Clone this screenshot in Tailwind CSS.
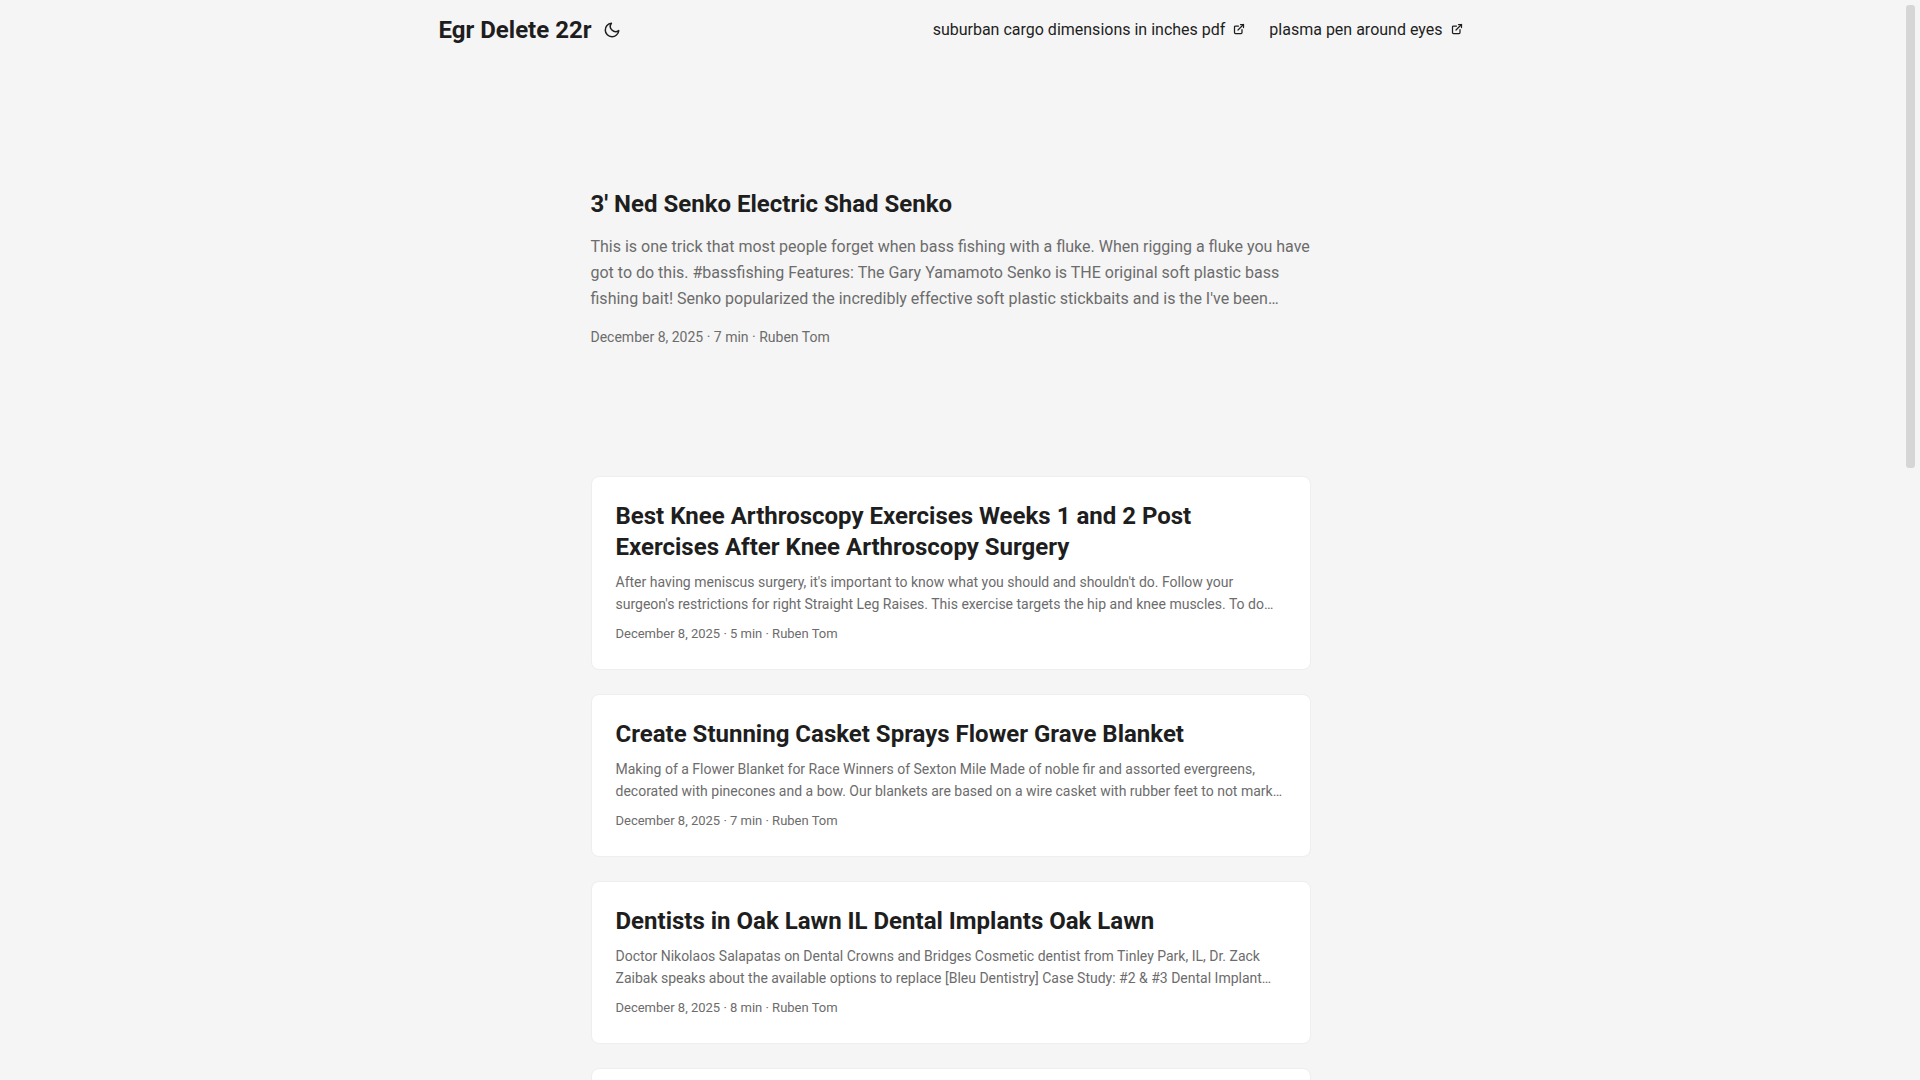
<!DOCTYPE html>
<html lang="en">
<head>
<meta charset="utf-8">
<meta name="viewport" content="width=device-width, initial-scale=1">
<title>Egr Delete 22r</title>
<script src="https://cdn.jsdelivr.net/npm/@tailwindcss/browser@4"></script>
</head>
<body class="flex h-screen overflow-hidden bg-[#f5f5f5] font-['Roboto',sans-serif] text-base text-[#1e1e1e]">
  <div class="min-w-0 flex-1 overflow-hidden">
    <header>
      <nav class="mx-auto flex h-15 max-w-[1072px] items-center justify-between px-6">
        <div class="flex items-center gap-[7px]">
          <a href="#" class="text-2xl font-bold">Egr Delete 22r</a>
          <button type="button" aria-label="Toggle theme" class="px-1">
            <svg class="size-[18px]" viewBox="0 0 24 24" fill="none" stroke="currentColor" stroke-width="2" stroke-linecap="round" stroke-linejoin="round"><path d="M21 12.79A9 9 0 1 1 11.21 3 7 7 0 0 0 21 12.79z"/></svg>
          </button>
        </div>
        <ul class="flex gap-6">
          <li><a href="#" class="flex items-center gap-2">suburban cargo dimensions in inches pdf
            <svg class="mb-0.5 size-3" viewBox="0 0 24 24" fill="none" stroke="currentColor" stroke-width="2.5" stroke-linecap="round" stroke-linejoin="round"><path d="M18 13v6a2 2 0 01-2 2H5a2 2 0 01-2-2V8c0-1.1.9-2 2-2h6"/><path d="M15 3h6v6"/><path d="M10 14L21 3"/></svg></a></li>
          <li><a href="#" class="flex items-center gap-2">plasma pen around eyes
            <svg class="mb-0.5 size-3" viewBox="0 0 24 24" fill="none" stroke="currentColor" stroke-width="2.5" stroke-linecap="round" stroke-linejoin="round"><path d="M18 13v6a2 2 0 01-2 2H5a2 2 0 01-2-2V8c0-1.1.9-2 2-2h6"/><path d="M15 3h6v6"/><path d="M10 14L21 3"/></svg></a></li>
        </ul>
      </nav>
    </header>

    <main class="mx-auto max-w-3xl p-6">
      <article class="mt-6 mb-12 flex min-h-80 flex-col justify-center">
        <h2 class="text-2xl leading-[31px] font-bold"><a href="#">3' Ned Senko Electric Shad Senko</a></h2>
        <p class="my-3.5 leading-[26px] text-[#6c6c6c]">This is one trick that most people forget when bass fishing with a fluke. When rigging a fluke you have got to do this. #bassfishing Features: The Gary Yamamoto Senko is THE original soft plastic bass fishing bait! Senko popularized the incredibly effective soft plastic stickbaits and is the I've been…</p>
        <footer class="text-sm leading-[22px] text-[#6c6c6c]">December 8, 2025 · 7 min · Ruben Tom</footer>
      </article>

      <div class="flex flex-col gap-6">
        <article class="rounded-lg border border-[#eeeeee] bg-white p-6">
          <h2 class="text-2xl leading-[31px] font-bold"><a href="#">Best Knee Arthroscopy Exercises Weeks 1 and 2 Post Exercises After Knee Arthroscopy Surgery</a></h2>
          <p class="my-2 text-sm leading-[22px] text-[#6c6c6c]">After having meniscus surgery, it's important to know what you should and shouldn't do. Follow your surgeon's restrictions for right Straight Leg Raises. This exercise targets the hip and knee muscles. To do…</p>
          <footer class="text-[13px] leading-[22px] text-[#6c6c6c]">December 8, 2025 · 5 min · Ruben Tom</footer>
        </article>

        <article class="rounded-lg border border-[#eeeeee] bg-white p-6">
          <h2 class="text-2xl leading-[31px] font-bold"><a href="#">Create Stunning Casket Sprays Flower Grave Blanket</a></h2>
          <p class="my-2 text-sm leading-[22px] text-[#6c6c6c]">Making of a Flower Blanket for Race Winners of Sexton Mile Made of noble fir and assorted evergreens, decorated with pinecones and a bow. Our blankets are based on a wire casket with rubber feet to not mark…</p>
          <footer class="text-[13px] leading-[22px] text-[#6c6c6c]">December 8, 2025 · 7 min · Ruben Tom</footer>
        </article>

        <article class="rounded-lg border border-[#eeeeee] bg-white p-6">
          <h2 class="text-2xl leading-[31px] font-bold"><a href="#">Dentists in Oak Lawn IL Dental Implants Oak Lawn</a></h2>
          <p class="my-2 text-sm leading-[22px] text-[#6c6c6c]">Doctor Nikolaos Salapatas on Dental Crowns and Bridges Cosmetic dentist from Tinley Park, IL, Dr. Zack Zaibak speaks about the available options to replace [Bleu Dentistry] Case Study: #2 &amp; #3 Dental Implant…</p>
          <footer class="text-[13px] leading-[22px] text-[#6c6c6c]">December 8, 2025 · 8 min · Ruben Tom</footer>
        </article>

        <article class="min-h-40 rounded-lg border border-[#eeeeee] bg-white p-6"></article>
      </div>
    </main>
  </div>

  <!-- scrollbar track and thumb -->
  <div class="w-[19px] shrink-0 p-[5px]" aria-hidden="true">
    <div class="h-[463px] rounded-[3px] bg-[#d6d6d6]"></div>
  </div>
</body>
</html>
